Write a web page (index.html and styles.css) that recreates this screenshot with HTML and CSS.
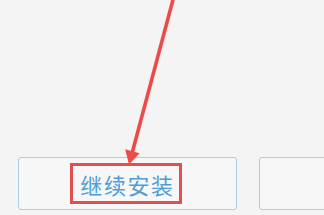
FILE: index.html
```html
<!DOCTYPE html>
<html lang="zh">
<head>
<meta charset="utf-8">
<link rel="stylesheet" href="styles.css">
</head>
<body>
<div class="page">
  <div class="buttons">
    <div class="btn primary">
      <span class="label">继续安装</span>
      <span class="highlight"></span>
    </div>
    <div class="btn secondary"></div>
  </div>
  <svg class="arrow" width="324" height="215" viewBox="0 0 324 215">
    <line x1="174" y1="-4" x2="132.4" y2="152" stroke="#ee4a4a" stroke-width="3.6" stroke-linecap="round"/>
    <polygon points="125.2,149.2 139.6,153.2 129,164.5" fill="#ee4a4a"/>
  </svg>
</div>
</body>
</html>
```
FILE: styles.css
```css
html, body {
  margin: 0;
  padding: 0;
  background: #f4f4f4;
  overflow: hidden;
}
.page {
  position: relative;
  width: 324px;
  height: 215px;
  overflow: hidden;
}
.buttons {
  display: flex;
  gap: 22px;
  padding: 157px 0 0 18px;
}
.btn {
  position: relative;
  flex: none;
  box-sizing: border-box;
  height: 53px;
  border: 1px solid #a9cdea;
  border-radius: 3px;
  background: #f7f7f7;
  display: flex;
  align-items: center;
  justify-content: center;
}
.primary {
  width: 219px;
}
.secondary {
  width: 140px;
}
.label {
  font-family: "Noto Sans CJK SC", "Noto Sans", sans-serif;
  font-size: 22px;
  font-weight: 400;
  letter-spacing: 1.6px;
  color: #4f9cd8;
  line-height: 1;
}
.highlight {
  position: absolute;
  left: 51px;
  top: 5px;
  width: 112px;
  height: 41px;
  box-sizing: border-box;
  border: 3px solid #e0504e;
}
.arrow {
  position: absolute;
  left: 0;
  top: 0;
}
```
